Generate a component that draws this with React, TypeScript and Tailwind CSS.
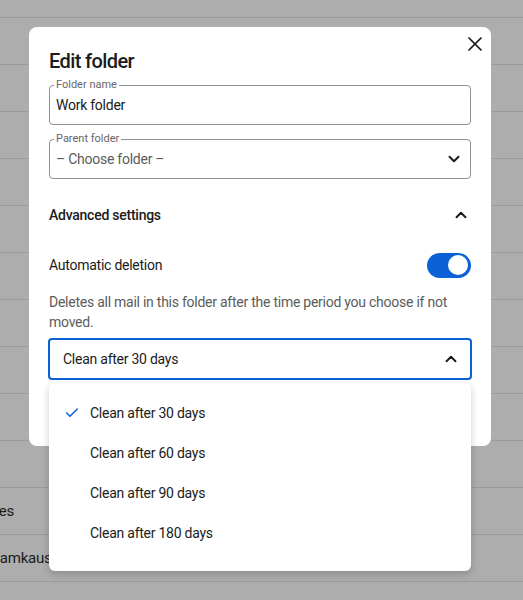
import { Check, X } from "lucide-react";

const rows = [
  "",
  "",
  "",
  "",
  "",
  "",
  "",
  "",
  "",
  "",
  "Kaustes",
  "Spamkaust",
  "",
];

function Chevron({ up = false }: { up?: boolean }) {
  return (
    <svg width="18" height="18" viewBox="0 0 24 24" fill="none" stroke="#1b1b1b" strokeWidth="2.6" strokeLinecap="round" strokeLinejoin="round">
      <path d={up ? "m18 15-6-6-6 6" : "m6 9 6 6 6-6"} />
    </svg>
  );
}

function OutlinedField({
  label,
  children,
}: {
  label: string;
  children: React.ReactNode;
}) {
  return (
    <div className="relative flex h-10 items-center rounded-[4px] border border-[#8f8f8f] pl-[6px] pr-[7px]">
      <span className="absolute -top-[8px] left-[4px] bg-white px-[2px] text-[11px] leading-[14px] tracking-normal text-[#666]">
        {label}
      </span>
      {children}
    </div>
  );
}

export default function App() {
  const options = [30, 60, 90, 180];

  return (
    <div
      className="relative h-[600px] w-full overflow-hidden bg-[#adadad] tracking-[-0.25px] text-[#1b1b1b]"
      style={{ fontFamily: "Roboto, 'Liberation Sans', sans-serif" }}
    >
      {/* page behind the scrim */}
      <div className="flex flex-col pt-[17px]">
        {rows.map((r, i) => (
          <div
            key={i}
            className="flex h-[47px] items-center border-t border-[#9b9b9b] text-[15px] whitespace-nowrap"
          >
            {r === "Kaustes" ? (
              <div className="flex w-[14px] justify-end">{r}</div>
            ) : (
              <span className="-ml-[17px]">{r}</span>
            )}
          </div>
        ))}
      </div>

      {/* modal */}
      <div className="absolute left-[29px] top-[27px] w-[462px] rounded-[8px] bg-white px-5 pt-5">
        <button className="absolute right-[4px] top-[5px] p-0">
          <X size={24} strokeWidth={1.75} color="#1b1b1b" />
        </button>

        <h2 className="text-[20px] leading-[28px] font-medium tracking-[-0.6px]">Edit folder</h2>

        <div className="mt-[10px]">
          <OutlinedField label="Folder name">
            <span className="text-[14px]">Work folder</span>
          </OutlinedField>
        </div>

        <div className="mt-[14px]">
          <OutlinedField label="Parent folder">
            <span className="flex-1 text-[14px] text-[#5c5c5c]">– Choose folder –</span>
            <Chevron />
          </OutlinedField>
        </div>

        <div className="mt-[12px] flex h-12 items-center justify-between pr-[1px]">
          <span className="text-[14px] font-medium">Advanced settings</span>
          <Chevron up />
        </div>

        <div className="mt-[6px] flex h-10 items-center justify-between">
          <span className="text-[14px]">Automatic deletion</span>
          <div className="flex h-[25px] w-[44px] items-center justify-end rounded-full bg-[#0a62d6] pr-[3px]">
            <div className="h-[20px] w-[20px] rounded-full bg-white" />
          </div>
        </div>

        <p className="mt-[7px] text-[14px] leading-[20px] text-[#5c5c5c]">
          Deletes all mail in this folder after the time period you choose if not moved.
        </p>

        <div className="relative -mx-[1px] mt-[6px]">
          <div className="flex h-[42px] items-center rounded-[4px] border-2 border-[#0a62d6] pl-[13px] pr-[10px]">
            <span className="flex-1 text-[14px]">Clean after 30 days</span>
            <Chevron up />
          </div>

          {/* dropdown */}
          <div className="absolute left-[1px] right-[1px] top-[calc(100%+3px)] z-10 rounded-[6px] bg-white pt-[10px] pb-[18px] shadow-[0_3px_8px_rgba(0,0,0,0.2)]">
            {options.map((d, i) => (
              <div key={d} className="flex h-10 items-center gap-[10px] pl-[15px] text-[14px]">
                <span className="flex w-4 justify-center">
                  {i === 0 && <Check size={16} strokeWidth={2.25} color="#0a62d6" />}
                </span>
                Clean after {d} days
              </div>
            ))}
          </div>
        </div>

        <div className="h-[66px]" />
      </div>
    </div>
  );
}
